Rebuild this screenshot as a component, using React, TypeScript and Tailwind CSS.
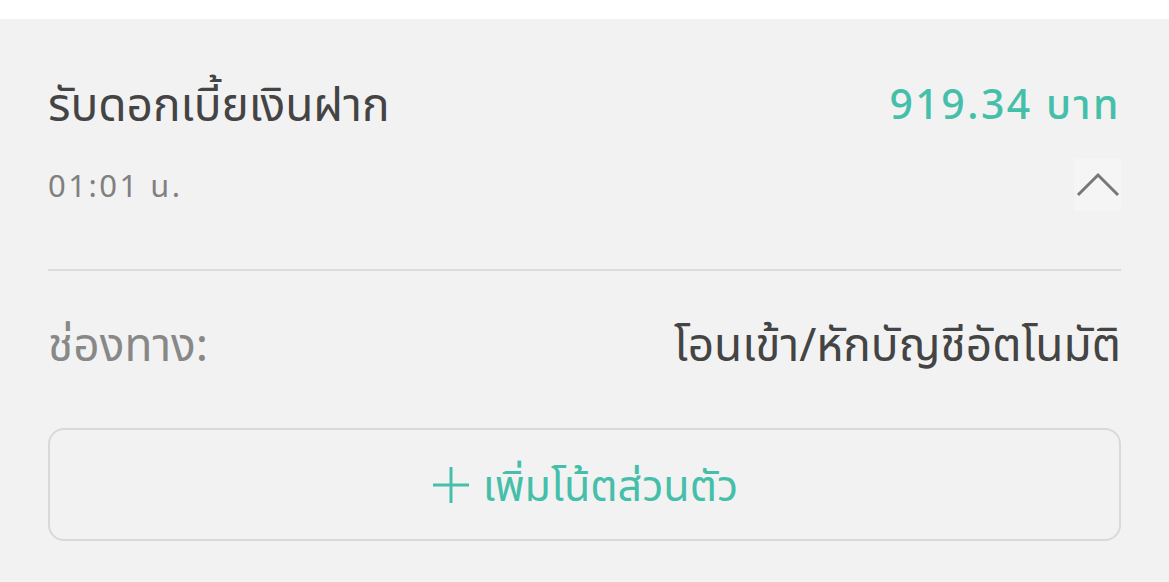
export default function App() {
    return (
        <div className="w-[1169px] h-[582px] bg-white overflow-hidden" style={{ fontFamily: '"Noto Sans", "Noto Sans Thai", "Liberation Sans", sans-serif' }}>
            <div className="h-[19px] bg-white"></div>
            <div className="h-[563px] bg-[#f2f2f2] px-12 flex flex-col">
                <div className="flex items-center justify-between pt-[44px]">
                    <h1 className="text-[46px] leading-[80px] text-[#444444]">รับดอกเบี้ยเงินฝาก</h1>
                    <span className="text-[41px] leading-[80px] tracking-[2.5px] font-medium text-[#45bfaa]">919.34 บาท</span>
                </div>
                <div className="flex items-center justify-between mt-[16px]">
                    <span className="text-[31px] leading-[52px] tracking-[2.5px] text-[#808080]">01:01 น.</span>
                    <div className="w-[47px] h-[52px] bg-[#f5f5f5] flex items-center justify-center">
                        <svg width="44" height="26" viewBox="0 0 44 26">
                            <path d="M2 23 L22 3 L42 23" fill="none" stroke="#777777" strokeWidth="3" />
                        </svg>
                    </div>
                </div>
                <div className="h-[2px] bg-[#dcdcdc] mt-[58px]"></div>
                <div className="flex items-center justify-between mt-[42px]">
                    <span className="text-[46px] leading-[60px] text-[#888888]">ช่องทาง:</span>
                    <span className="text-[46px] leading-[60px] text-[#444444]">โอนเข้า/หักบัญชีอัตโนมัติ</span>
                </div>
                <button className="mt-[55px] h-[113px] border-2 border-[#d9d9d9] rounded-[16px] flex items-center justify-center gap-3 text-[#45bfaa]">
                    <svg width="40" height="40" viewBox="0 0 40 40">
                        <path d="M20 2 V38 M2 20 H38" stroke="#45bfaa" strokeWidth="3" />
                    </svg>
                    <span className="text-[43px] leading-[60px]">เพิ่มโน้ตส่วนตัว</span>
                </button>
            </div>
        </div>
    );
}
